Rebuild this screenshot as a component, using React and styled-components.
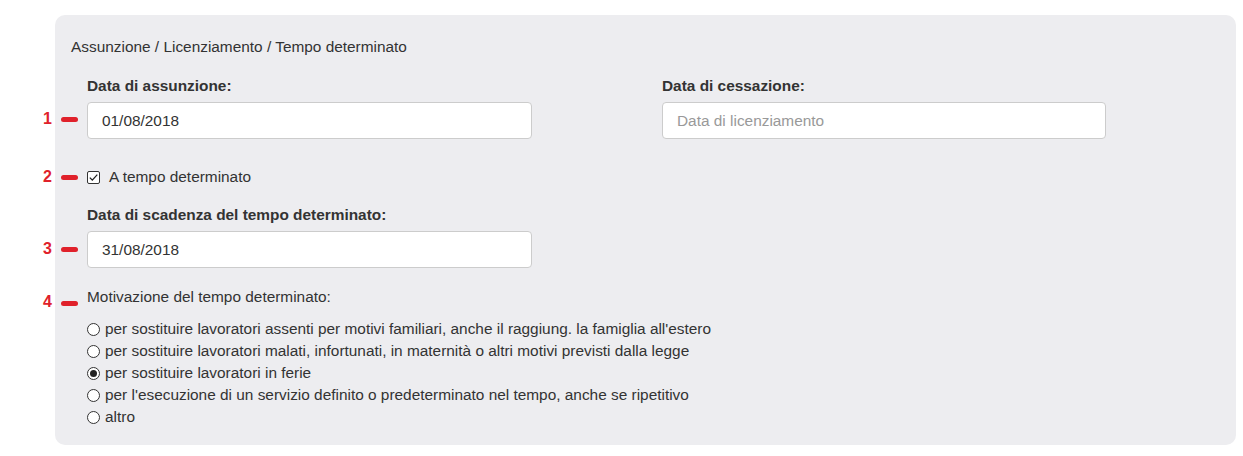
import React from 'react';
import styled, { createGlobalStyle } from 'styled-components';

const GlobalStyle = createGlobalStyle`
  html, body {
    margin: 0;
    padding: 0;
    background: #ffffff;
  }
  body {
    font-family: "Liberation Sans", Arial, sans-serif;
    font-size: 15.4px;
    color: #333333;
  }
`;

const Page = styled.div`
  padding: 15px 7px 12px 55px;
`;

const Panel = styled.section`
  background: #ededf0;
  border-radius: 10px;
  padding: 22px 16px 17px 16px;
  min-height: 390px;
`;

const Heading = styled.div`
  line-height: 20px;
  margin-bottom: 19px;
`;

const Form = styled.div`
  padding-left: 16px;
`;

const Columns = styled.div`
  display: grid;
  grid-template-columns: 445px 444px;
  column-gap: 130px;
`;

const Field = styled.div`
  position: relative;
`;

const Label = styled.label`
  display: block;
  font-weight: bold;
  line-height: 20px;
  margin-bottom: 6px;
`;

const Input = styled.input`
  box-sizing: border-box;
  display: block;
  width: 100%;
  height: 37px;
  padding: 0 14px;
  border: 1px solid #cccccc;
  border-radius: 4px;
  background: #ffffff;
  font-family: inherit;
  font-size: 15.4px;
  color: #333333;
  outline: none;
  &::placeholder {
    color: #999999;
  }
`;

const Marker = styled.div`
  position: absolute;
  left: -44px;
  top: ${p => p.$top}px;
  display: flex;
  align-items: center;
  gap: 9px;
  color: #e0212b;
  font-weight: bold;
  font-size: 16px;
  line-height: 20px;
  pointer-events: none;
  &::after {
    content: '';
    display: block;
    width: 17px;
    height: 5px;
    border-radius: 3px;
    background: #e0212b;
    margin-top: ${p => p.$dash || 0}px;
  }
`;

const CheckRow = styled.label`
  position: relative;
  display: flex;
  align-items: center;
  line-height: 20px;
  margin: 28px 0 18px;
`;

const Box = styled.span`
  box-sizing: border-box;
  width: 13px;
  height: 13px;
  border: 1px solid #333333;
  border-radius: 2px;
  background: #ffffff;
  margin-right: 9px;
  display: flex;
  align-items: center;
  justify-content: center;
`;

const Question = styled.div`
  position: relative;
  line-height: 20px;
  margin: 19px 0 11px;
`;

const RadioList = styled.div`
  display: flex;
  flex-direction: column;
`;

const RadioRow = styled.label`
  display: flex;
  align-items: center;
  line-height: 22px;
`;

const Circle = styled.span`
  box-sizing: border-box;
  width: 13px;
  height: 13px;
  border: 1px solid #333333;
  border-radius: 50%;
  background: #ffffff;
  margin-right: 5px;
  display: flex;
  align-items: center;
  justify-content: center;
  &::after {
    content: '';
    display: ${p => (p.$on ? 'block' : 'none')};
    width: 7px;
    height: 7px;
    border-radius: 50%;
    background: #222222;
  }
`;

const reasons = [
  "per sostituire lavoratori assenti per motivi familiari, anche il raggiung. la famiglia all'estero",
  'per sostituire lavoratori malati, infortunati, in maternità o altri motivi previsti dalla legge',
  'per sostituire lavoratori in ferie',
  "per l'esecuzione di un servizio definito o predeterminato nel tempo, anche se ripetitivo",
  'altro',
];

export default function App() {
  return (
    <>
      <GlobalStyle />
      <Page>
        <Panel>
          <Heading>Assunzione / Licenziamento / Tempo determinato</Heading>
          <Form>
            <Columns>
              <Field>
                <Label>Data di assunzione:</Label>
                <Input defaultValue="01/08/2018" />
                <Marker $top={33}>1</Marker>
              </Field>
              <Field>
                <Label>Data di cessazione:</Label>
                <Input placeholder="Data di licenziamento" />
              </Field>
            </Columns>

            <CheckRow>
              <Box>
                <svg width="11" height="11" viewBox="0 0 11 11">
                  <path d="M1.8 5.6 L4.3 8.1 L9.3 2.6" fill="none" stroke="#222" strokeWidth="1.3" />
                </svg>
              </Box>
              A tempo determinato
              <Marker $top={0}>2</Marker>
            </CheckRow>

            <Columns>
              <Field>
                <Label>Data di scadenza del tempo determinato:</Label>
                <Input defaultValue="31/08/2018" />
                <Marker $top={34}>3</Marker>
              </Field>
            </Columns>

            <Question>
              Motivazione del tempo determinato:
              <Marker $top={5} $dash={2}>4</Marker>
            </Question>

            <RadioList>
              {reasons.map((r, i) => (
                <RadioRow key={i}>
                  <Circle $on={i === 2} />
                  {r}
                </RadioRow>
              ))}
            </RadioList>
          </Form>
        </Panel>
      </Page>
    </>
  );
}
